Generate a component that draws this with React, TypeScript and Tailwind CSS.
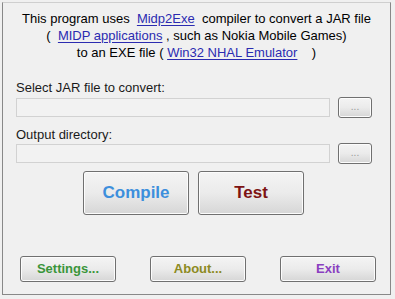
import React from 'react';

const font = { fontFamily: '"Liberation Sans", Arial, sans-serif' };

function WinButton({ label, className, textClass }: { label: string; className: string; textClass: string }) {
    return (
        <button
            className={`flex items-center justify-center rounded-[3px] border border-[#707070] bg-gradient-to-b from-[#f4f4f4] via-[#ebebeb] to-[#d6d6d6] shadow-[inset_0_0_0_1px_#fcfcfc] ${className}`}
        >
            <span className={textClass}>{label}</span>
        </button>
    );
}

function FileRow() {
    return (
        <div className="flex items-center gap-[8px]">
            <div className="h-[19px] w-[314px] border border-[#d2d2d2] bg-[#f2f2f2]" />
            <WinButton
                label="..."
                className="h-[21px] w-[34px]"
                textClass="text-[10px] leading-none text-[#9a9a9a] -mt-[2px]"
            />
        </div>
    );
}

export default function App() {
    const link = 'text-[#2b2bb0] underline underline-offset-[2px]';
    return (
        <div className="h-[299px] w-[395px] bg-[#f0f0f0] pl-[2px] pt-[2px]" style={font}>
            <div className="flex h-[293px] w-[389px] flex-col border border-[#888888] border-t-[#cfcfcf] pl-[13px]">
                {/* intro */}
                <div className="mt-[7px] pr-[13px] text-center text-[13px] leading-[17px] text-black">
                    <div className="whitespace-pre">
                        This program uses  <span className={link}>Midp2Exe</span>  compiler to convert a JAR file
                    </div>
                    <div className="whitespace-pre">
                        (  <span className={link}>MIDP applications</span> , such as Nokia Mobile Games)
                    </div>
                    <div className="whitespace-pre">
                        to an EXE file ( <span className={link}>Win32 NHAL Emulator</span>    )
                    </div>
                </div>

                <div className="mt-[19px] text-[13px] leading-[16px] text-[#1a1a1a]">Select JAR file to convert:</div>
                <div className="mt-[1px]">
                    <FileRow />
                </div>

                <div className="mt-[9px] text-[13px] leading-[16px] text-[#1a1a1a]">Output directory:</div>
                <div>
                    <FileRow />
                </div>

                <div className="mt-[7px] flex gap-[9px] pl-[67px]">
                    <WinButton
                        label="Compile"
                        className="h-[44px] w-[106px]"
                        textClass="text-[17px] font-bold text-[#3d8fdc]"
                    />
                    <WinButton
                        label="Test"
                        className="h-[44px] w-[106px]"
                        textClass="text-[17px] font-bold text-[#7d1414]"
                    />
                </div>

                <div className="mt-[41px] flex gap-[34px] pl-[4px]">
                    <WinButton
                        label="Settings..."
                        className="h-[26px] w-[96px]"
                        textClass="text-[13px] font-bold text-[#3a953a]"
                    />
                    <WinButton
                        label="About..."
                        className="h-[26px] w-[96px]"
                        textClass="text-[13px] font-bold text-[#8c8a22]"
                    />
                    <WinButton
                        label="Exit"
                        className="h-[26px] w-[96px]"
                        textClass="text-[13px] font-bold text-[#8a3fc0]"
                    />
                </div>
            </div>
        </div>
    );
}
